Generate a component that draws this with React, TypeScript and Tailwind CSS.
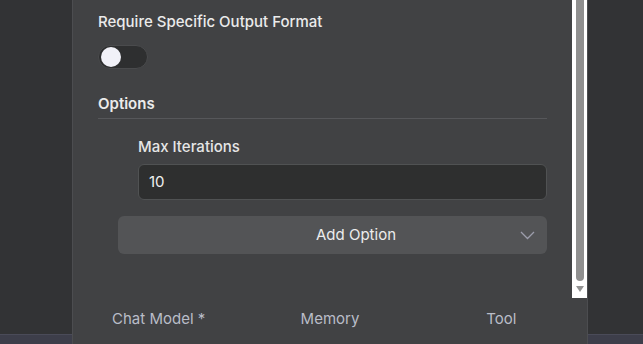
import React from 'react';

const font = { fontFamily: 'Inter, "Noto Sans", sans-serif' };

export default function App() {
  return (
    <div className="relative h-[344px] w-[643px] overflow-hidden bg-[#323335]" style={font}>
      <div className="absolute bottom-0 left-0 right-0 h-[10px] border-t border-[#4a4b58] bg-[#3d3e4a]" />

      <div className="relative ml-[72px] flex h-full w-[516px] flex-col border-x border-[#4c4d50] bg-[#414244]">
        <div className="flex h-[298px]">
          <div className="flex-1 pl-[25px] pr-[25px] pt-3">
            <div className="text-[15px] font-medium leading-5 text-[#ebebeb]">Require Specific Output Format</div>
            <div className="mt-[13px] flex h-6 w-[50px] items-center rounded-full border border-[#4a4b4d] bg-[#2e2f30] px-[2px]">
              <div className="size-5 rounded-full bg-[#f1f1f8]" />
            </div>

            <div className="mt-[25px] border-b border-[#56575a] pb-1 text-[15px] font-semibold leading-5 text-[#ebebeb]">Options</div>

            <div className="pl-[40px] pt-[18px]">
              <div className="text-[15px] font-medium leading-5 text-[#e6e6e6]">Max Iterations</div>
              <div className="mt-[7px] flex h-9 items-center rounded-md border border-[#505253] bg-[#2e2f2f] px-[10px] text-[15px] text-[#f0f0f0]">
                10
              </div>
            </div>

            <div className="ml-[20px] mt-4 flex h-[38px] items-center rounded-md bg-[#535456] pr-[12px]">
              <span className="flex-1 pl-[74px] text-center text-[15px] text-[#ececec]">Add Option</span>
              <svg width="15" height="9" viewBox="0 0 15 9" fill="none">
                <polyline points="1,1 7.5,7.5 14,1" stroke="#9c9dab" strokeWidth="1.3" />
              </svg>
            </div>
          </div>

          <div className="flex w-[15px] flex-col items-center bg-white">
            <div className="h-[281px] w-[8px] rounded-b-full bg-[#8f8f8f]" />
            <svg width="10" height="8" viewBox="0 0 10 8" className="mt-[4px]">
              <polygon points="1,1 9,1 5,7" fill="#939393" />
            </svg>
          </div>
        </div>

        <div className="grid grid-cols-3 pt-[10px] text-center text-[15px] text-[#b9bdc8]">
          <div>Chat Model *</div>
          <div>Memory</div>
          <div>Tool</div>
        </div>
      </div>
    </div>
  );
}
